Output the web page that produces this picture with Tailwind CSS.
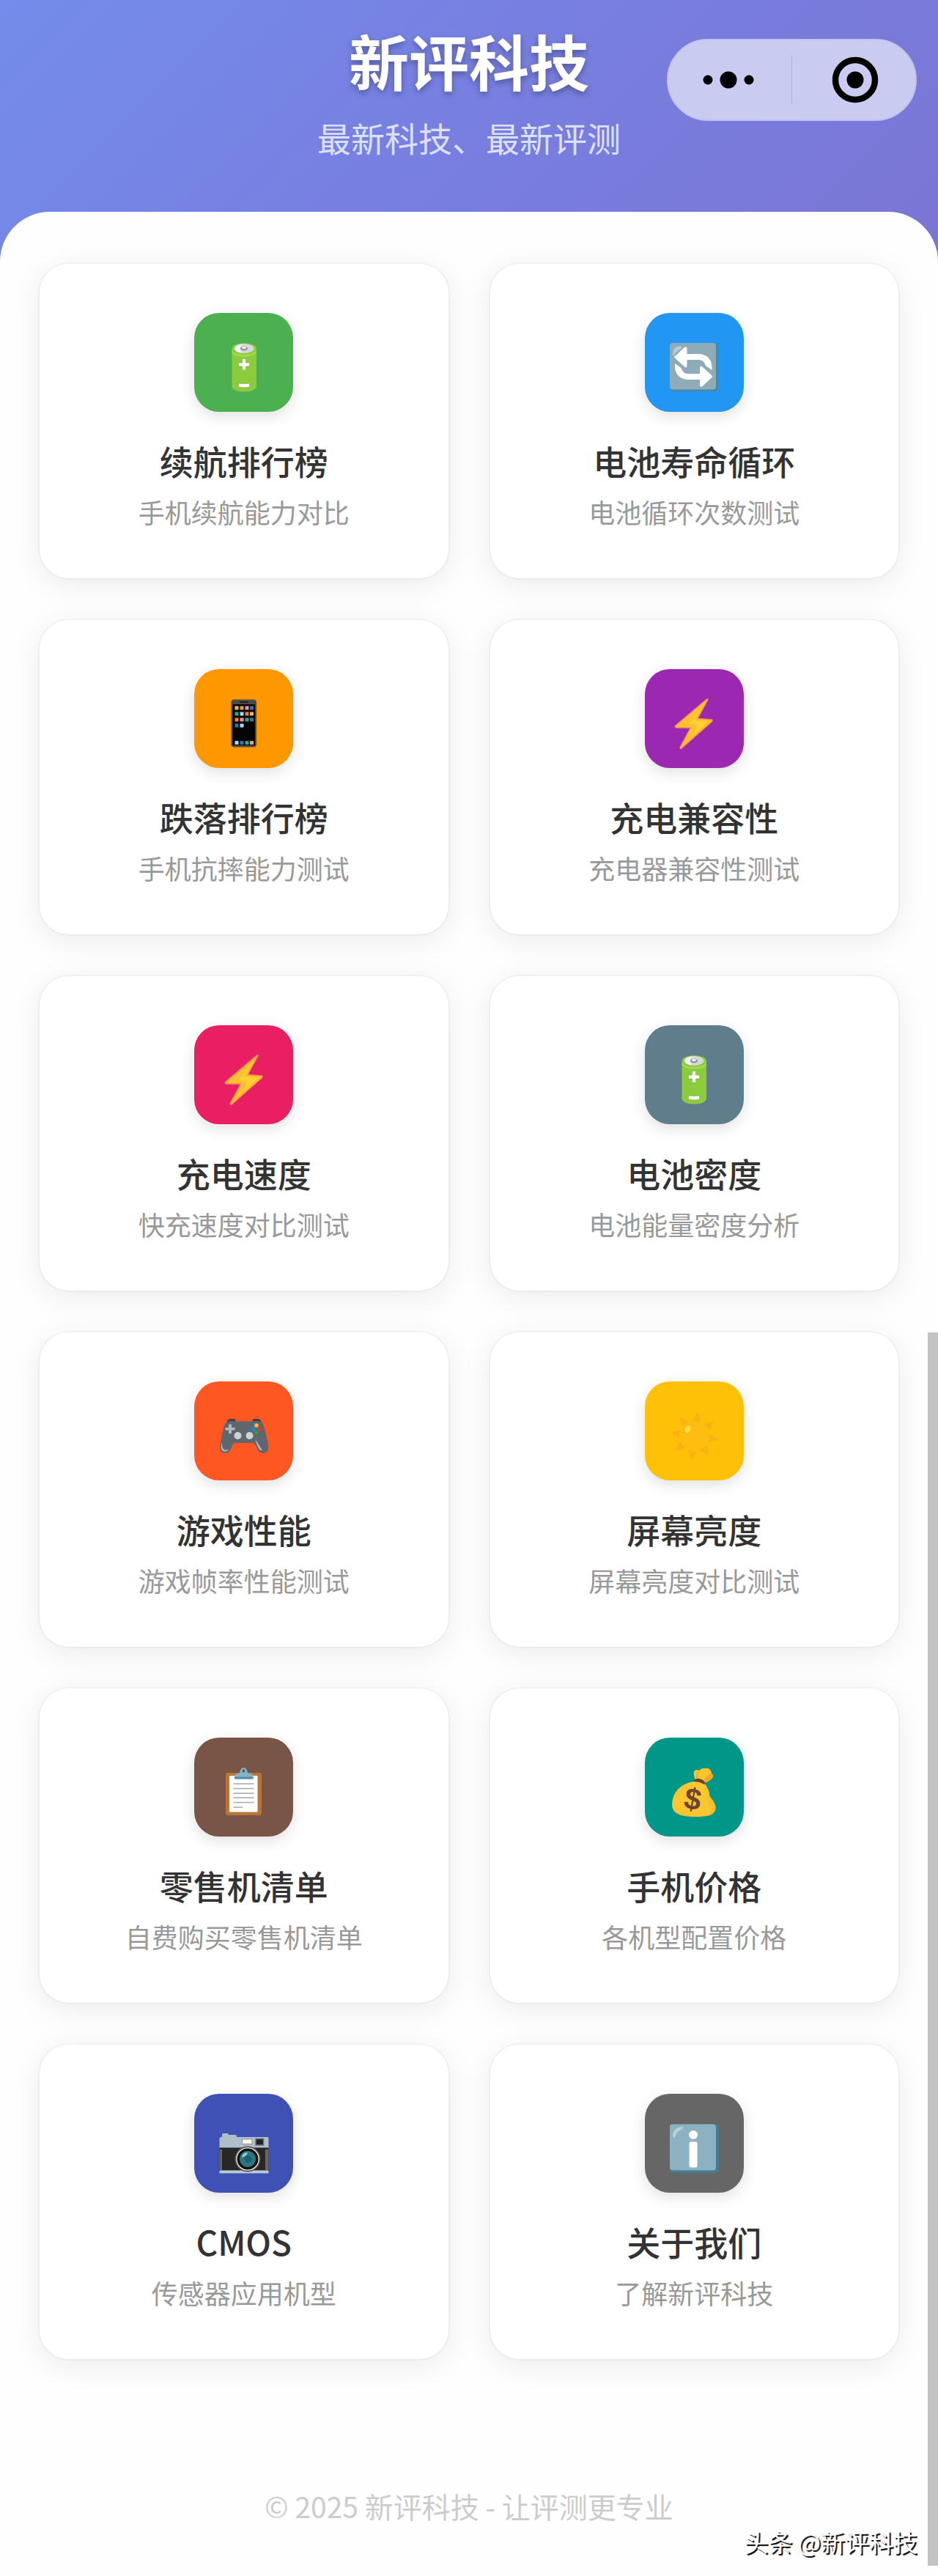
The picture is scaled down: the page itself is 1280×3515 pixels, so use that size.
<!DOCTYPE html>
<html lang="zh-CN">
<head>
  <meta charset="UTF-8" />
  <meta name="viewport" content="width=device-width, initial-scale=1" />
  <title>新评科技</title>
  <script src="https://cdn.jsdelivr.net/npm/@tailwindcss/browser@4"></script>
</head>
<body class="relative bg-[#fefefe] font-['Noto_Sans_CJK_SC',sans-serif]">

  <!-- Shared icons -->
  <svg class="hidden">
    <symbol id="battery" viewBox="0 0 72 72">
      <path d="M19.5 11c0-10.500 33.500-10.500 33.500 0v51c0 10-33.500 10-33.500 0z" fill="#8bcb3c" />
      <path d="M19.500 12c0 9 33.500 9 33.500 0v3c0 9-33.500 9-33.500 0z" fill="#a5d84a" />
      <ellipse cx="36" cy="10.500" rx="13.500" ry="6.500" fill="#d5d9da" />
      <path d="M24 11c1-6 8-6 11-6-5 2-6 7-2 11-5 0-9-2-9-5z" fill="#f2f4f4" />
      <ellipse cx="36" cy="10.500" rx="5" ry="3" fill="#8d9395" />
      <ellipse cx="36" cy="9.500" rx="3" ry="1.700" fill="#f0f0f0" />
      <path d="M33.500 24.500h5v5.500h5v5h-5v5h-5v-5h-5v-5h5z" fill="#fff" stroke="#74a839" stroke-width=".6" />
      <path d="M28.500 58q7.500 1 15 0v5q-7.500 2-15 0z" fill="#fff" stroke="#74a839" stroke-width=".6" />
    </symbol>
    <symbol id="bolt" viewBox="0 0 72 72">
      <path d="M55 3.500 41 29.500 60 31Q62 32 60 34L19 70Q16.500 71 17.500 68L31.500 42H12Q9 41 11 39L53 3.500Q55 2 55 3.500z" fill="#fdc02f" stroke="#f98f55" stroke-width="1.500" stroke-linejoin="round" />
      <path d="M49 10 35 32l20 2-19 17 5-13-12-1z" fill="#ffd133" />
    </symbol>
  </svg>

  <!-- Header -->
  <header class="relative bg-[linear-gradient(135deg,#748ceb_0%,#7780e1_45%,#7b75d4_100%)] pt-[34px] pb-[140px] text-center">
    <h1 class="text-[82px] leading-[96px] font-bold text-white [text-shadow:0_4px_8px_rgba(0,0,0,0.3)]">新评科技</h1>
    <p class="mt-[27px] text-[46px] leading-[60px] text-[#dde0fb]">最新科技、最新评测</p>

    <div class="absolute top-[53px] right-[29px] flex h-[112px] w-[341px] items-center rounded-full border-2 border-[#bfc2ee] bg-[#cacbf1]">
      <button type="button" aria-label="更多" class="flex flex-1 items-center justify-center pr-1">
        <svg class="h-[24px] w-[72px]" viewBox="0 0 72 24">
          <circle cx="8" cy="12" r="6.500" /><circle cx="36" cy="12" r="11.500" /><circle cx="64" cy="12" r="6.500" />
        </svg>
      </button>
      <span class="h-[68px] w-px bg-[#b0b2da]"></span>
      <button type="button" aria-label="关闭" class="flex flex-1 items-center justify-center pl-1">
        <svg class="size-[64px]" viewBox="0 0 64 64">
          <circle cx="32" cy="32" r="27" fill="none" stroke="#000" stroke-width="8.500" />
          <circle cx="32" cy="32" r="11.500" />
        </svg>
      </button>
    </div>
  </header>

  <!-- Menu -->
  <main class="relative -mt-[68px] grid grid-cols-2 gap-[57px] rounded-t-[68px] bg-[#fefefe] px-[54px] pt-[71px]">
    <a href="#" class="flex flex-col items-center rounded-[40px] bg-white py-[67px] ring-2 ring-black/3 shadow-[0_8px_40px_rgba(0,0,0,0.08)]">
      <span class="flex size-[135px] items-center justify-center rounded-[34px] bg-[#4caf50] pt-3 shadow-[0_6px_20px_rgba(0,0,0,0.12)]">
        <svg class="size-[72px]"><use href="#battery" /></svg>
      </span>
      <h2 class="mt-[36px] text-[46px] leading-[60px] font-medium text-[#333]">续航排行榜</h2>
      <p class="mt-[16px] text-[36px] leading-[48px] text-[#999]">手机续航能力对比</p>
    </a>

    <a href="#" class="flex flex-col items-center rounded-[40px] bg-white py-[67px] ring-2 ring-black/3 shadow-[0_8px_40px_rgba(0,0,0,0.08)]">
      <span class="flex size-[135px] items-center justify-center rounded-[34px] bg-[#2196f3] pt-3 shadow-[0_6px_20px_rgba(0,0,0,0.12)]">
        <svg class="size-[72px]" viewBox="0 0 72 72">
          <rect x="4" y="4" width="65" height="65" rx="4" fill="#4a87a5" />
          <rect x="3" y="3" width="63" height="63.500" rx="4" fill="#8eabb8" />
          <path d="M7 17Q8 7 18 7q4 2-3 6-5 3-6 7-2 1-2-3z" fill="#b4ccd6" />
          <g fill="#fff">
            <path id="loop" d="M9.500 21.500 23 9q3.500-2 3.500 2v7H42c12 0 18.500 8 18.500 18v4L52 34c-2-6-5-8-10-8H26.500v8q0 4-3.500 1.500L10 23.500q-1-1-.5-2z" />
            <use href="#loop" transform="rotate(180 35.250 35.500)" />
          </g>
        </svg>
      </span>
      <h2 class="mt-[36px] text-[46px] leading-[60px] font-medium text-[#333]">电池寿命循环</h2>
      <p class="mt-[16px] text-[36px] leading-[48px] text-[#999]">电池循环次数测试</p>
    </a>

    <a href="#" class="flex flex-col items-center rounded-[40px] bg-white py-[67px] ring-2 ring-black/3 shadow-[0_8px_40px_rgba(0,0,0,0.08)]">
      <span class="flex size-[135px] items-center justify-center rounded-[34px] bg-[#ff9800] pt-3 shadow-[0_6px_20px_rgba(0,0,0,0.12)]">
        <svg class="size-[72px]" viewBox="0 0 72 72">
          <rect x="18.500" y="3.500" width="34.500" height="65" rx="4" fill="#4b4b48" />
          <rect x="30" y="6" width="12" height="2" rx="1" fill="#222" />
          <rect x="20.500" y="10" width="30.500" height="56" rx="1" fill="#050505" />
          <g fill="#f5b461"><rect x="23.500" y="12.500" width="5" height="5" /><rect x="30.500" y="12.500" width="5" height="5" fill="#e69b45" /><rect x="44" y="20.500" width="5" height="5" /></g>
          <g fill="#f48fb1"><rect x="37.500" y="12.500" width="5" height="5" /><rect x="30.500" y="28.500" width="5" height="5" /><rect x="44" y="60" width="5" height="5" /></g>
          <g fill="#2f77ae"><rect x="44" y="12.500" width="5" height="5" /><rect x="44" y="28.500" width="5" height="5" /><rect x="23.500" y="36.500" width="5" height="5" /><rect x="30.500" y="60" width="5" height="5" /></g>
          <g fill="#35a584"><rect x="23.500" y="20.500" width="5" height="5" /><rect x="37.500" y="28.500" width="5" height="5" /><rect x="37.500" y="60" width="5" height="5" /></g>
          <g fill="#a9d8f5"><rect x="30.500" y="20.500" width="5" height="5" /><rect x="30.500" y="36.500" width="5" height="5" /><rect x="23.500" y="60" width="5" height="5" /></g>
          <g fill="#f0813a"><rect x="37.500" y="20.500" width="5" height="5" /><rect x="23.500" y="28.500" width="5" height="5" /></g>
        </svg>
      </span>
      <h2 class="mt-[36px] text-[46px] leading-[60px] font-medium text-[#333]">跌落排行榜</h2>
      <p class="mt-[16px] text-[36px] leading-[48px] text-[#999]">手机抗摔能力测试</p>
    </a>

    <a href="#" class="flex flex-col items-center rounded-[40px] bg-white py-[67px] ring-2 ring-black/3 shadow-[0_8px_40px_rgba(0,0,0,0.08)]">
      <span class="flex size-[135px] items-center justify-center rounded-[34px] bg-[#9c27b0] pt-3 shadow-[0_6px_20px_rgba(0,0,0,0.12)]">
        <svg class="size-[72px]"><use href="#bolt" /></svg>
      </span>
      <h2 class="mt-[36px] text-[46px] leading-[60px] font-medium text-[#333]">充电兼容性</h2>
      <p class="mt-[16px] text-[36px] leading-[48px] text-[#999]">充电器兼容性测试</p>
    </a>

    <a href="#" class="flex flex-col items-center rounded-[40px] bg-white py-[67px] ring-2 ring-black/3 shadow-[0_8px_40px_rgba(0,0,0,0.08)]">
      <span class="flex size-[135px] items-center justify-center rounded-[34px] bg-[#e91e63] pt-3 shadow-[0_6px_20px_rgba(0,0,0,0.12)]">
        <svg class="size-[72px]"><use href="#bolt" /></svg>
      </span>
      <h2 class="mt-[36px] text-[46px] leading-[60px] font-medium text-[#333]">充电速度</h2>
      <p class="mt-[16px] text-[36px] leading-[48px] text-[#999]">快充速度对比测试</p>
    </a>

    <a href="#" class="flex flex-col items-center rounded-[40px] bg-white py-[67px] ring-2 ring-black/3 shadow-[0_8px_40px_rgba(0,0,0,0.08)]">
      <span class="flex size-[135px] items-center justify-center rounded-[34px] bg-[#607d8b] pt-3 shadow-[0_6px_20px_rgba(0,0,0,0.12)]">
        <svg class="size-[72px]"><use href="#battery" /></svg>
      </span>
      <h2 class="mt-[36px] text-[46px] leading-[60px] font-medium text-[#333]">电池密度</h2>
      <p class="mt-[16px] text-[36px] leading-[48px] text-[#999]">电池能量密度分析</p>
    </a>

    <a href="#" class="flex flex-col items-center rounded-[40px] bg-white py-[67px] ring-2 ring-black/3 shadow-[0_8px_40px_rgba(0,0,0,0.08)]">
      <span class="flex size-[135px] items-center justify-center rounded-[34px] bg-[#ff5722] pt-3 shadow-[0_6px_20px_rgba(0,0,0,0.12)]">
        <svg class="size-[72px]" viewBox="0 0 72 72">
          <path d="M12 19q1-6 5-6h6q2 1 1 5zM60 19q-1-6-5-6h-6q-2 1-1 5z" fill="#3f4446" />
          <path d="M12 18q4-3 12-1.500h24Q56 15 60 18c3 2 4 8 6 17 2 8 4 15 3 20q-2 5-7 5c-5 0-7-4-9-8-2-5-3-6-7-6H26c-4 0-5 1-7 6-2 4-4 8-9 8q-5 0-6.500-5C3 50 4 43 6 35c2-9 3-15 6-17z" fill="#5d676d" />
          <path d="M6 45c0 8 2 13 9 9-3 6-9 4-10 0-1-3 0-6 1-9zM51 42c4 2 5 7 9 12 1 2-1 3-3 1-3-4-4-9-6-13z" fill="#aab4ba" />
          <path d="M15 20.500h4V25h4.500v3.500H19V33h-4v-4.500h-4.500V25H15z" fill="#b4b9bc" />
          <circle cx="27.500" cy="36" r="5" fill="#ced2d4" /><circle cx="43.500" cy="36" r="5" fill="#ced2d4" />
          <circle cx="53" cy="22" r="2.800" fill="#fbc02d" /><circle cx="48.500" cy="27" r="2.800" fill="#2380dd" />
          <circle cx="57.500" cy="27" r="2.800" fill="#e0392f" /><circle cx="53" cy="31.500" r="2.800" fill="#31a04b" />
        </svg>
      </span>
      <h2 class="mt-[36px] text-[46px] leading-[60px] font-medium text-[#333]">游戏性能</h2>
      <p class="mt-[16px] text-[36px] leading-[48px] text-[#999]">游戏帧率性能测试</p>
    </a>

    <a href="#" class="flex flex-col items-center rounded-[40px] bg-white py-[67px] ring-2 ring-black/3 shadow-[0_8px_40px_rgba(0,0,0,0.08)]">
      <span class="flex size-[135px] items-center justify-center rounded-[34px] bg-[#ffc107] pt-3 shadow-[0_6px_20px_rgba(0,0,0,0.12)]">
        <svg class="size-[72px]" viewBox="0 0 72 72">
          <g fill="#fdb015" transform="rotate(8 36.500 36.500)">
            <path id="ray" d="M36.500 3.500q2 5 5.500 12-1 2-5.500 0-4.500 2-5.500 0 3.500-7 5.500-12z" />
            <use href="#ray" transform="rotate(45 36.500 36.500)" />
            <use href="#ray" transform="rotate(90 36.500 36.500)" />
            <use href="#ray" transform="rotate(135 36.500 36.500)" />
            <use href="#ray" transform="rotate(180 36.500 36.500)" />
            <use href="#ray" transform="rotate(225 36.500 36.500)" />
            <use href="#ray" transform="rotate(270 36.500 36.500)" />
            <use href="#ray" transform="rotate(315 36.500 36.500)" />
          </g>
          <circle cx="36.500" cy="36.500" r="19" fill="#ffbd12" />
          <ellipse cx="27.500" cy="27" rx="3.500" ry="5" transform="rotate(25 27.500 27)" fill="#ffe24d" />
        </svg>
      </span>
      <h2 class="mt-[36px] text-[46px] leading-[60px] font-medium text-[#333]">屏幕亮度</h2>
      <p class="mt-[16px] text-[36px] leading-[48px] text-[#999]">屏幕亮度对比测试</p>
    </a>

    <a href="#" class="flex flex-col items-center rounded-[40px] bg-white py-[67px] ring-2 ring-black/3 shadow-[0_8px_40px_rgba(0,0,0,0.08)]">
      <span class="flex size-[135px] items-center justify-center rounded-[34px] bg-[#795548] pt-3 shadow-[0_6px_20px_rgba(0,0,0,0.12)]">
        <svg class="size-[72px]" viewBox="0 0 72 72">
          <rect x="11" y="10" width="49" height="58" rx="3" fill="#b8753a" />
          <rect x="16" y="14" width="38.500" height="49.500" rx="1" fill="#fff" />
          <path d="M21.500 25h28M21.500 31.500h28M21.500 38h28M21.500 44h28M21.500 50.500h28M21.500 57H34" stroke="#a3a8ab" stroke-width="1.300" />
          <path d="M23 18.500V14q1-3 7-3.500 1-7.500 5.500-7.500T41 10.500q7 .5 7.500 3.500v4.500z" fill="#82b7c9" />
          <path d="M23 15.500h25.500v3H23z" fill="#568ea3" />
          <circle cx="35.500" cy="7.500" r="2" fill="#4b5b60" />
        </svg>
      </span>
      <h2 class="mt-[36px] text-[46px] leading-[60px] font-medium text-[#333]">零售机清单</h2>
      <p class="mt-[16px] text-[36px] leading-[48px] text-[#999]">自费购买零售机清单</p>
    </a>

    <a href="#" class="flex flex-col items-center rounded-[40px] bg-white py-[67px] ring-2 ring-black/3 shadow-[0_8px_40px_rgba(0,0,0,0.08)]">
      <span class="flex size-[135px] items-center justify-center rounded-[34px] bg-[#009688] pt-3 shadow-[0_6px_20px_rgba(0,0,0,0.12)]">
        <svg class="size-[72px]" viewBox="0 0 72 72">
          <path d="M37 19c0-5-3-9 0-12q3-2 6 0 4-4 8-3 5-1 7 2 2 3 2 5 4 3 1 6-5 6-11 6-6-4-13-4z" fill="#fdc62d" />
          <path d="M50 19q5-8 10-8 4 3 1 6-5 6-10 6zM43 7q-3 4-1 10l-3-1q0-6 4-9z" fill="#f2a623" />
          <path d="M36 22c10-2 16 2 19 10 3 5 1 8 4 12 5 6 8 12 6 17-2 6-8 8-17 8.500-10 1-25 1-33-3C6 63 5 55 7 46c3-13 14-22 29-24z" fill="#fec62e" />
          <path d="M56 36c0 6 2 8 4 11 5 6 6 11 4 15-2 5-9 7-17 7 9-2 13-4 13-9 0-6-7-11-4-24z" fill="#fabc30" />
          <path d="M35 22q2-5 8-4 7 1 8 6l-1 2q-6-4-15-4z" fill="#6d4332" />
          <text x="34.500" y="60" text-anchor="middle" font-family="Liberation Sans, sans-serif" font-weight="700" font-size="41" fill="#6d4332" transform="rotate(10 34.500 46)">$</text>
        </svg>
      </span>
      <h2 class="mt-[36px] text-[46px] leading-[60px] font-medium text-[#333]">手机价格</h2>
      <p class="mt-[16px] text-[36px] leading-[48px] text-[#999]">各机型配置价格</p>
    </a>

    <a href="#" class="flex flex-col items-center rounded-[40px] bg-white py-[67px] ring-2 ring-black/3 shadow-[0_8px_40px_rgba(0,0,0,0.08)]">
      <span class="flex size-[135px] items-center justify-center rounded-[34px] bg-[#3f51b5] pt-3 shadow-[0_6px_20px_rgba(0,0,0,0.12)]">
        <svg class="size-[72px]" viewBox="0 0 72 72">
          <path d="M6 21v-3q0-2 2-2h5q2 0 2 2h9q2 0 2 3h42q1.500 0 1.500 1.500V36h-67V23Q2.500 21 6 21z" fill="#aebfc9" />
          <rect x="2.500" y="35.500" width="67" height="31.500" fill="#272727" />
          <path d="M2.500 38H6v28H2.500zM65 38h4.500v28H65z" fill="#6b6360" />
          <rect x="2.500" y="66.500" width="67" height="4" rx="1" fill="#bccbd4" />
          <rect x="33.500" y="24" width="13.500" height="6.500" fill="#fff8e8" stroke="#8a9399" />
          <rect x="52" y="23.500" width="10.500" height="8.500" fill="#1e2326" stroke="#64717a" stroke-width="1.500" />
          <circle cx="41" cy="51" r="17.500" fill="#63524c" />
          <circle cx="41" cy="51" r="15.800" fill="#eee" />
          <circle cx="41" cy="51" r="14.500" fill="#111" />
          <circle cx="41" cy="51" r="11" fill="#2c7683" />
          <circle cx="41.500" cy="51" r="5" fill="#225f6c" />
          <path d="M33 49q1-7 8-7-1 5-8 7z" fill="#8ed0d8" />
        </svg>
      </span>
      <h2 class="mt-[36px] text-[46px] leading-[60px] font-medium text-[#333]">CMOS</h2>
      <p class="mt-[16px] text-[36px] leading-[48px] text-[#999]">传感器应用机型</p>
    </a>

    <a href="#" class="flex flex-col items-center rounded-[40px] bg-white py-[67px] ring-2 ring-black/3 shadow-[0_8px_40px_rgba(0,0,0,0.08)]">
      <span class="flex size-[135px] items-center justify-center rounded-[34px] bg-[#666] pt-3 shadow-[0_6px_20px_rgba(0,0,0,0.12)]">
        <svg class="size-[72px]" viewBox="0 0 72 72">
          <rect x="4" y="4" width="66" height="66" rx="4" fill="#407c92" />
          <rect x="3" y="3.500" width="63" height="63" rx="4" fill="#8cb1c1" />
          <path d="M7 18Q8 8 20 7q4 1-3 5-6 3-7 10-3 1-3-4z" fill="#b4d1de" />
          <circle cx="35" cy="18" r="6" fill="#fff" />
          <rect x="29.500" y="27.500" width="11" height="35" rx="2" fill="#fff" />
        </svg>
      </span>
      <h2 class="mt-[36px] text-[46px] leading-[60px] font-medium text-[#333]">关于我们</h2>
      <p class="mt-[16px] text-[36px] leading-[48px] text-[#999]">了解新评科技</p>
    </a>
  </main>

  <!-- Footer -->
  <footer class="pt-[170px] pb-[66px] text-center">
    <p class="text-[39px] leading-[60px] text-[#ccc]">© 2025 新评科技 - 让评测更专业</p>
  </footer>

  <!-- Watermark -->
  <p class="absolute right-[28px] bottom-[23px] text-[33px] leading-[48px] text-white [text-shadow:2px_2px_1px_#000]">头条 @新评科技</p>

  <!-- Scroll thumb -->
  <div class="absolute right-0 top-[1818px] bottom-[14px] w-[14px] bg-[#c3c3c3]"></div>
</body>
</html>
